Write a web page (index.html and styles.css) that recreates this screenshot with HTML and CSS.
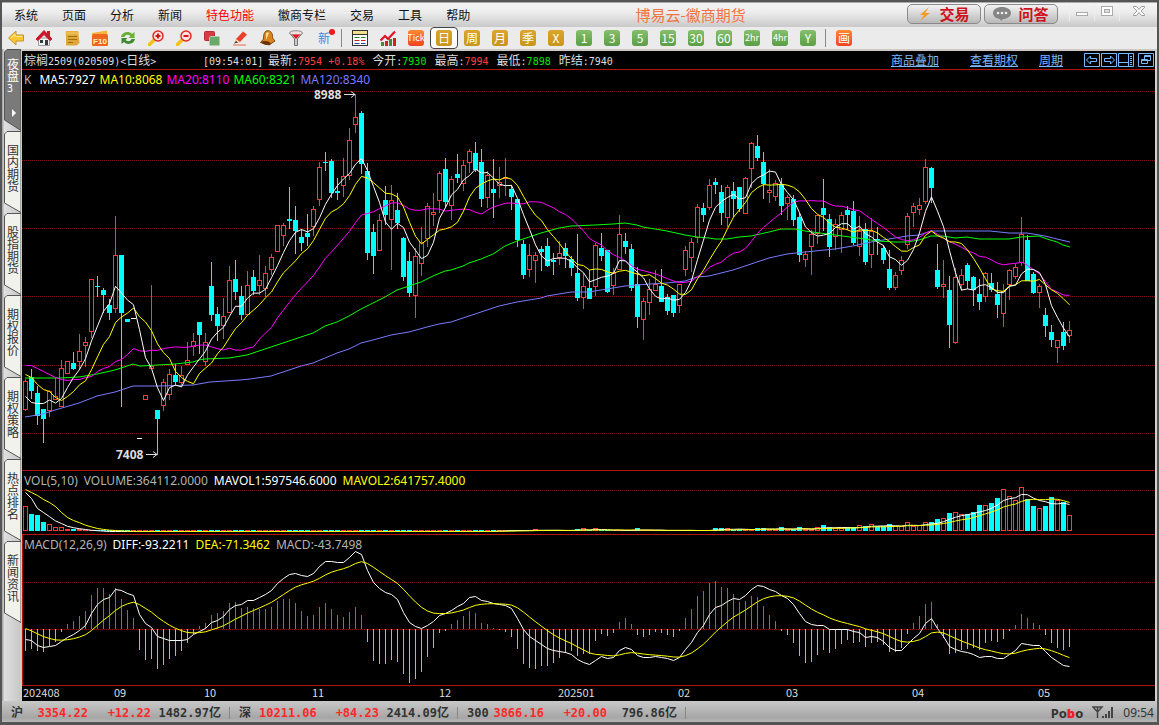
FILE: index.html
```html
<!DOCTYPE html>
<html lang="zh-CN">
<head>
<meta charset="utf-8">
<title>博易云-徽商期货</title>
<link rel="stylesheet" href="styles.css">
</head>
<body>
<div class="window">
  <header class="titlebar">
    <nav class="menu">
      <button>系统</button><button>页面</button><button>分析</button><button>新闻</button><button class="hot">特色功能</button><button>徽商专栏</button><button>交易</button><button>工具</button><button>帮助</button>
    </nav>
    <h1 class="title">博易云-徽商期货</h1>
    <div class="actions">
      <button class="pill"><svg width="14" height="16" viewBox="0 0 14 16"><path d="M11 1 2 9h4l-4 6 10-8H7z" fill="#f59a23"/></svg><span>交易</span></button>
      <button class="pill"><svg width="18" height="14" viewBox="0 0 18 14"><path d="M9 0c5 0 9 2.500 9 6s-4 6-8 6l-2 2-1-2C3 11.500 0 9.500 0 6s4-6 9-6z" fill="#858585"/><circle cx="5" cy="6" r="1.300" fill="#eee"/><circle cx="9" cy="6" r="1.300" fill="#eee"/><circle cx="13" cy="6" r="1.300" fill="#eee"/></svg><span>问答</span></button>
    </div>
    <div class="winctl">
      <button aria-label="最小化"><svg width="14" height="14"><rect x="1.500" y="8.500" width="11" height="3" fill="#fff" stroke="#aaa"/></svg></button>
      <button aria-label="最大化"><svg width="14" height="14"><rect x="1.500" y="2.500" width="11" height="9" fill="#fff" stroke="#aaa"/><rect x="4.500" y="5.500" width="5" height="3" fill="#ddd" stroke="#aaa"/></svg></button>
      <button aria-label="关闭"><svg width="14" height="14"><path d="M1.500 2.500h3l2.500 3 2.500-3h3v1L9 7l3.500 3.500v1h-3L7 8.500l-2.500 3h-3v-1L5 7 1.500 3.500z" fill="#fff" stroke="#999"/></svg></button>
    </div>
  </header>

  <div class="toolbar">
    <button aria-label="后退"><svg width="16" height="16"><path d="M.5 8 8 1v4h7.500v6H8v4z" fill="#fcc630" stroke="#c8922a"/><path d="M3 8l4-4v2.500h7" fill="none" stroke="#ffe9a0"/></svg></button>
    <button aria-label="首页"><svg width="16" height="16"><path d="M2.500 8h11v7.500h-11z" fill="#f2f2f2" stroke="#999"/><path d="M11 1h3v5h-3z" fill="#b22"/><path d="M0 9 8 .5 16 9l-2 1.500-6-6-6 6z" fill="#c9152b" stroke="#c9152b"/><path d="M4 10h3v3H4z" fill="#2c3b44"/><path d="M9 10h3v5H9z" fill="#3a3a3a"/></svg></button>
    <button aria-label="公告"><svg width="16" height="16"><path d="M2 1h12l1.500 12-3 2.500H2z" fill="#e0a63a"/><path d="M1.500 1.500h13v3h-13z" fill="#f0bb50"/><path d="M4 6.500h9M4 9.500h9M4 12.500h5" stroke="#a36b14"/></svg></button>
    <button aria-label="F10"><svg width="18" height="16"><path d="M1 3 16 .5V5H1z" fill="#f6b23d"/><rect x="1" y="4" width="16" height="12" rx="1.500" fill="#f0641e"/><text x="9" y="14" class="ic-sm">F10</text></svg></button>
    <button aria-label="刷新"><svg width="16" height="16"><path d="M1 7c1-5 8-6.500 11-3l2.500-2v6H8.500L10.500 6C8 4 5.500 4.500 4.500 7z" fill="#6ab035"/><path d="M15 9c-1 5-8 6.500-11 3l-2.500 2V8h6l-2 2c2.500 2 5 1.500 6-1z" fill="#3d8a2c"/></svg></button>
    <button aria-label="放大"><svg width="16" height="16"><path d="M6 10 1.500 14.500" stroke="#f3c11c" stroke-width="3.500" stroke-linecap="round"/><circle cx="10" cy="6" r="5" fill="#fbe4e0" stroke="#e02a22" stroke-width="1.500"/><path d="M7.500 6h5M10 3.500v5" stroke="#d01818" stroke-width="2"/></svg></button>
    <button aria-label="缩小"><svg width="16" height="16"><path d="M6 10 1.500 14.500" stroke="#f3c11c" stroke-width="3.500" stroke-linecap="round"/><circle cx="10" cy="6" r="5" fill="#fbe4e0" stroke="#e02a22" stroke-width="1.500"/><path d="M7.500 6h5" stroke="#d01818" stroke-width="2"/></svg></button>
    <button aria-label="叠加"><svg width="16" height="16"><rect x=".5" y="1.500" width="10" height="9" rx="1" fill="#d83a42" stroke="#bb2a32"/><rect x="5.500" y="6.500" width="10" height="9" rx="1" fill="#6ba869" stroke="#a9cda6"/></svg></button>
    <button aria-label="画线"><svg width="16" height="16"><path d="M4 9 11 1.500 15 4.500 8 12 3 13z" fill="#e9402c"/><path d="M4 9 2 13.500 8 12z" fill="#f7d9a8"/><path d="M2 13.500 4 11l2 1.500z" fill="#333"/><path d="M1 15h13" stroke="#e06a50"/></svg></button>
    <button aria-label="预警"><svg width="16" height="16"><path d="M6 1c5-1.500 7 3 6.500 7L15 11 9 15 .5 12.500 3.500 9C3.500 6 3.500 3 6 1z" fill="#d98420" stroke="#8a4b10"/><path d="M6 3c2-1 3 0 3 0L6 10z" fill="#ffe08a"/><path d="M1 12c3-2 9-1 10 2-3 2-8 1-10-2z" fill="#6b3208"/></svg></button>
    <button aria-label="筛选"><svg width="16" height="16"><path d="M2 3.500 6.500 9v6.500h3V9L14 3.500z" fill="#c8c8c8" stroke="#777"/><ellipse cx="8" cy="3" rx="6.500" ry="2.300" fill="#f1e0e0" stroke="#888"/><path d="M4 4.500h8L8 9z" fill="#e8101c"/></svg></button>
    <button class="new" aria-label="新功能">新<i></i></button>
    <span class="sep"></span>
    <button aria-label="报价"><svg width="16" height="16"><rect x=".5" y=".5" width="15" height="15" fill="#fff" stroke="#333"/><path d="M1 1h14v3.500H1z" fill="#efe08c"/><path d="M1 4.500h14" stroke="#333"/><path d="M2.500 7.500h5M9 7.500h4.500" stroke="#238a23"/><path d="M2.500 10.500h5M9 10.500h4.500" stroke="#c62020"/><path d="M2.500 13.500h5M9 13.500h4.500" stroke="#2044a0"/></svg></button>
    <button aria-label="走势"><svg width="18" height="17"><path d="M2 12h3v4H2zM10 9h3v7h-3z" fill="#46893c"/><path d="M6 11h3v5H6zM14 8h3v8h-3z" fill="#c22"/><path d="M1.500 10.500 6 6l3 3 7-7.500" fill="none" stroke="#e3142a" stroke-width="2.200"/></svg></button>
    <button><b class="tile red narrow">Tick</b></button>
    <button class="on"><b class="tile gold">日</b></button>
    <button><b class="tile gold">周</b></button>
    <button><b class="tile gold">月</b></button>
    <button><b class="tile gold">季</b></button>
    <button><b class="tile gold">X</b></button>
    <button><b class="tile green">1</b></button>
    <button><b class="tile green">3</b></button>
    <button><b class="tile green">5</b></button>
    <button><b class="tile green">15</b></button>
    <button><b class="tile green">30</b></button>
    <button><b class="tile green">60</b></button>
    <button><b class="tile green narrow">2hr</b></button>
    <button><b class="tile green narrow">4hr</b></button>
    <button><b class="tile green">Y</b></button>
    <span class="sep"></span>
    <button><b class="tile red">画</b></button>
  </div>

  <main class="work">
    <aside class="tabs">
      <button class="tab active"><svg viewBox="0 0 17 82"><path d="M17 .5H3L.5 3v68L17 81.500z"/></svg><span>夜盘</span><u>3</u><i></i></button>
      <button class="tab"><svg viewBox="0 0 17 82"><path d="M17 .5H3L.5 3v69L17 81.500z"/></svg><span>国内期货</span></button>
      <button class="tab"><svg viewBox="0 0 17 82"><path d="M17 .5H3L.5 3v69L17 81.500z"/></svg><span>股指期货</span></button>
      <button class="tab"><svg viewBox="0 0 17 82"><path d="M17 .5H3L.5 3v69L17 81.500z"/></svg><span>期权报价</span></button>
      <button class="tab"><svg viewBox="0 0 17 82"><path d="M17 .5H3L.5 3v69L17 81.500z"/></svg><span>期权策略</span></button>
      <button class="tab"><svg viewBox="0 0 17 82"><path d="M17 .5H3L.5 3v69L17 81.500z"/></svg><span>热点排名</span></button>
      <button class="tab"><svg viewBox="0 0 17 82"><path d="M17 .5H3L.5 3v69L17 81.500z"/></svg><span>新闻资讯</span></button>
    </aside>

    <section class="chart">
      <div class="quote">
        <span class="name">棕榈<u>2509(020509)&lt;</u>日线<u>&gt;</u></span>
        <span class="time"><u>[09:54:01]</u></span>
        <span>最新<u>:</u><u class="up">7954 +0.18%</u></span>
        <span>今开<u>:</u><u class="down">7930</u></span>
        <span>最高<u>:</u><u class="up">7994</u></span>
        <span>最低<u>:</u><u class="down">7898</u></span>
        <span>昨结<u>:7940</u></span>
        <nav class="links">
          <a href="#overlay">商品叠加</a><a href="#options">查看期权</a><a href="#period">周期</a>
          <div class="boxes">
            <button aria-label="左移"><svg width="16" height="14"><path d="M.5.5h15v13H.5zM2.500 7l4-4v2.500h6v3h-6V11z"/></svg></button>
            <button aria-label="右移"><svg width="16" height="14"><path d="M.5.5h15v13H.5zM13.500 7l-4-4v2.500h-6v3h6V11z"/></svg></button>
            <button aria-label="分栏"><svg width="16" height="14"><path d="M.5.5h15v13H.5zM10.500 1v12M1 9.500h9M12 3.500h2M12 5.500h2M12 7.500h2M12 9.500h2M12 11.500h2"/></svg></button>
            <button class="pop" aria-label="弹出"><svg width="16" height="14"><path d="M.5.5h15v13H.5zM6.500 6V2.500h6v5H10M3.500 6.500h6v4h-6zM6 3.500h6M3 7.500h6"/></svg></button>
          </div>
        </nav>
      </div>
      <div class="pane price">
        <div class="legend"><span class="g">K</span><span class="w ma5">MA5:7927</span><span class="y">MA10:8068</span><span class="m">MA20:8110</span><span class="gr">MA60:8321</span><span class="b">MA120:8340</span></div>
        <svg id="price" class="plot"></svg>
      </div>
      <div class="pane volume">
        <div class="legend"><span class="g">VOL(5,10)</span><span class="g">VOLUME:364112.0000</span><span class="w">MAVOL1:597546.6000</span><span class="y">MAVOL2:641757.4000</span></div>
        <svg id="volume" class="plot"></svg>
      </div>
      <div class="pane macd">
        <div class="legend"><span class="g">MACD(12,26,9)</span><span class="w">DIFF:-93.2211</span><span class="y">DEA:-71.3462</span><span class="g">MACD:-43.7498</span></div>
        <svg id="macd" class="plot"></svg>
      </div>
      <svg id="axis" class="axis"></svg>
    </section>
  </main>

  <footer class="status">
    <div class="index"><span>沪</span><b>3354.22</b><b>+12.22</b><span>1482.97亿</span></div>
    <div class="index"><span>深</span><b>10211.06</b><b>+84.23</b><span>2414.09亿</span></div>
    <div class="index"><span>300</span><b>3866.16</b><b>+20.00</b><span>796.86亿</span></div>
    <div class="tray">
      <strong>Po<b>b</b>o</strong>
      <svg width="22" height="14"><path d="M1 1h9L5.500 6zM5.500 1v11" fill="none" stroke="#444" stroke-width="1.500"/><path d="M10 10h2v2h-2zM13 8h2v4h-2zM16 5h2v7h-2zM19 1h2v11h-2z" fill="#444"/></svg>
      <time>09:54</time>
    </div>
  </footer>
</div>
<script src="chart.js"></script>
</body>
</html>
```
FILE: styles.css
```css
* { box-sizing: border-box; }
body {
  margin: 0;
  font: 12px/14px "Noto Sans CJK SC", sans-serif;
  color: #111;
  background: #555;
}
button {
  margin: 0;
  padding: 0;
  border: 0;
  background: none;
  font: inherit;
  color: inherit;
}
.window {
  display: flex;
  flex-direction: column;
  min-height: 100vh;
  border: solid #555;
  border-width: 2px 2px 3px;
  background: #d4cfcd;
}

/* title bar */
.titlebar {
  display: flex;
  flex: none;
  height: 25px;
  border-top: 1px solid #aaa;
  background: linear-gradient(#f4f4f4, #ececec 40%, #c9c9c9);
}
.menu { display: flex; align-items: center; white-space: nowrap; }
.menu button { padding: 0 12px; }
.menu .hot { color: #f00; }
.title {
  display: flex;
  align-items: center;
  justify-content: center;
  flex: 1;
  margin: 0;
  padding-right: 8px;
  font-size: 15px;
  font-weight: 400;
  color: #f37343;
}
.actions { display: flex; gap: 3px; padding-top: 1px; }
.pill {
  display: flex;
  align-items: center;
  justify-content: center;
  gap: 7px;
  width: 74px;
  height: 20px;
  border: 1px solid #8a8a8a;
  border-radius: 5px;
  background: linear-gradient(#f2f2f2, #d6d6d6 50%, #b8b8b8);
  font-size: 15px;
  font-weight: 700;
  color: #d0101a;
}
.winctl { display: flex; margin-left: 11px; }
.winctl button {
  width: 25px;
  height: 18px;
  border-left: 1px solid #eee;
}
.winctl button:last-child { width: 38px; }

/* toolbar */
.toolbar {
  display: flex;
  align-items: center;
  flex: none;
  height: 24px;
  border-bottom: 2px solid #cfc8c5;
  background: #ebebeb;
}
.toolbar button {
  display: flex;
  align-items: center;
  justify-content: center;
  width: 28px;
  height: 22px;
}
.toolbar .on { border: 1px solid #444; border-radius: 4px; background: #fff; }
.sep { width: 8px; height: 18px; background: linear-gradient(#888, #888) 3px 0 / 1px 100% no-repeat; }
.tile {
  display: flex;
  align-items: center;
  justify-content: center;
  width: 16px;
  height: 16px;
  border-radius: 3px;
  color: #fff;
  font-size: 12px;
  font-weight: 400;
  line-height: 16px;
}
.gold { background: linear-gradient(#dba52e, #c8951a); }
.green { background: linear-gradient(#86bf6c, #5a9e46); }
.red { background: linear-gradient(#ff8a30, #ee4420); }
.tile.narrow { font-size: 9px; }
.ic-sm { font: 700 8px "Liberation Sans", sans-serif; fill: #fff3c8; text-anchor: middle; }
.toolbar .new { position: relative; font-size: 12px; color: #3a8be0; }
.new i {
  position: absolute;
  top: 2px;
  right: 3px;
  width: 6px;
  height: 6px;
  border-radius: 50%;
  background: #f01818;
}

/* left tabs */
.work { display: flex; flex: 1; }
.tabs {
  display: flex;
  flex-direction: column;
  flex: none;
  width: 20px;
  padding-left: 2px;
  border-right: 2px solid #cfc8c5;
  margin-top: -2px;
  background: linear-gradient(90deg, #aaa 1px, #e0e0e0 2px, #c8c8c8);
}
.tab {
  position: relative;
  display: flex;
  flex-direction: column;
  align-items: flex-start;
  width: 16px;
  height: 82px;
  padding: 13px 0 0 3px;
}
.tab svg { position: absolute; inset: 0; width: 17px; height: 82px; }
.tab path { fill: #f2f2ec; stroke: #555; }
.tab span { position: relative; width: 12px; line-height: 12px; word-break: break-all; color: #333; }
.tab.active { padding-top: 9px; }
.tab.active path { fill: #7a7a7a; }
.tab.active span { color: #fff; }
.tab u { position: relative; font: 10px/14px "DejaVu Sans Mono", monospace; text-decoration: none; color: #fff; }
.tab.active i {
  position: relative;
  width: 0;
  margin: 13px 0 0 5px;
  border: solid transparent;
  border-width: 4px 0 4px 4px;
  border-left-color: #fff;
}

/* chart */
.chart {
  display: flex;
  flex-direction: column;
  flex: 1;
  min-width: 0;
  margin-right: 2px;
  background: #000;
}
.quote {
  display: flex;
  align-items: center;
  flex: none;
  gap: 8px;
  height: 19px;
  padding: 0 1px 0 2px;
  border-bottom: 1px solid #b4140a;
  color: #ddd;
  white-space: nowrap;
}
.quote u { font: 10px "DejaVu Sans Mono", monospace; text-decoration: none; white-space: pre; }
.quote .name { width: 171px; }
.quote .time { width: 57px; }
.quote .up { color: #ff4040; }
.quote .down { color: #00e600; }
.links { display: flex; align-items: center; margin-left: auto; color: #7ab8ff; }
.links a { color: inherit; margin-left: 31px; }
.links a:last-of-type { margin-left: 21px; }
.boxes { display: flex; gap: 1px; margin-left: 21px; }
.boxes button { display: flex; }
.boxes path { fill: none; stroke: #7ab8ff; }
.boxes .pop { margin-left: 3px; }

.pane { position: relative; border-bottom: 1px solid #b4140a; }
.price { flex: 1 0 401px; }
.volume { flex: 0 0 64px; }
.macd { flex: 0 0 151px; border-left: 1px solid #b4140a; }
.legend {
  position: absolute;
  top: 2px;
  left: 2px;
  display: flex;
  gap: 6px;
  font: 12px/16px "Noto Sans", sans-serif;
  white-space: nowrap;
}
.price .legend { gap: 4px; }
.macd .legend { left: 1px; }
.legend .ma5 { margin-left: 4px; }
.plot { display: block; position: absolute; inset: 0; width: 100%; height: 100%; pointer-events: none; }
.g { color: #b4b4b4; }
.w { color: #fff; }
.y { color: #ff0; }
.m { color: #f0f; }
.gr { color: #0f0; }
.b { color: #7a7aff; }
.axis { flex: none; width: 100%; height: 15px; }
.axis text { font: 11px "Noto Sans CJK SC", sans-serif; fill: #ddd; }

.grid { stroke: #8c0c0c; stroke-dasharray: 1 1; }
.bars { shape-rendering: crispEdges; }
.rise { fill: #000; stroke: #ff3c32; }
.riseline { fill: #ff3c32; }
.fall { fill: #0ff; }
.flat { fill: #fff; }
.line { fill: none; stroke-width: 1; }
.tag { font: 700 12px "Noto Sans", sans-serif; fill: #ddd; }
.arrow { fill: none; stroke: #ddd; }

/* status bar */
.status {
  display: flex;
  align-items: center;
  flex: none;
  height: 21px;
  padding: 2px 3px 0 0;
  background: linear-gradient(#c8c8c8, #a6a6a6 80%, #b8b8b8);
  font: 700 12px/14px "DejaVu Sans Mono", "Noto Sans CJK SC", monospace;
  color: #333;
}
.index {
  display: grid;
  grid-template-columns: 20px 57px 63px 70px;
  width: 228px;
  padding-left: 9px;
  background: linear-gradient(#888, #888) 100% 50% / 1px 12px no-repeat;
}
.index > * + * { text-align: right; }
.index b { color: #ff2828; }
.tray { display: flex; align-items: center; gap: 9px; margin-left: auto; font: 12px/14px "Noto Sans", sans-serif; }
.tray strong { font-weight: 700; font-size: 13px; }
.tray b { color: #f02020; }
```
FILE: chart.js
```js
// Each entry: direction (r rise, c fall, w flat), high, body top, body bottom, low.
const candles = `r379,381,410,411 c369,377,391,399 c386,393,416,425 c409,409,419,443 r390,391,411,417 r378,396,400,400 r360,368,407,407 r361,361,374,374 c352,363,369,370 r334,351,362,370
r337,342,346,367 r279,279,332,338 c276,286,287,297 c288,290,295,313 c299,305,313,320 r216,255,309,313 c255,255,313,407 c319,319,322,322 w318,318,319,319 w438,438,439,439
r395,395,400,400 r285,366,369,369 c410,410,419,455 r379,382,406,411 r369,374,395,400 c364,375,382,385 r366,375,383,385 r342,360,365,365 r333,341,347,356 c322,322,335,354
r333,342,362,366 c262,286,315,321 c307,314,326,341 r298,316,326,339 r266,280,313,313 c260,279,292,300 c286,296,315,320 r271,285,315,315 c270,277,291,295 r255,280,286,295
r266,273,289,297 r254,257,270,275 r225,225,252,252 r223,225,236,246 c187,219,221,229 c206,220,231,254 c229,237,243,251 c214,233,237,246 r206,209,227,236 r162,167,200,206
c152,162,163,171 c159,161,193,198 c178,191,193,200 r158,176,186,197 r128,140,176,180 r94,117,125,133 c111,113,164,174 c163,171,253,260 c224,232,256,274 r214,220,251,251
c186,200,215,225 r185,200,220,270 c193,210,223,229 c237,238,277,281 c252,261,293,297 r248,256,296,318 r227,242,264,276 r203,206,239,247 r193,212,215,226 r171,173,201,213
c158,169,202,208 r176,179,206,220 c154,174,178,183 r160,165,184,191 r149,151,163,173 c142,153,170,172 c149,162,199,207 r171,175,198,208 c159,189,193,218 r167,182,186,198
r158,177,179,196 c185,189,197,210 c199,199,240,247 c240,244,275,279 r244,255,270,277 r252,255,261,283 c246,249,252,271 c238,246,266,267 c253,260,262,275 r241,253,258,265
c243,248,256,268 c256,259,268,276 c234,273,298,301 r273,286,298,309 c270,288,299,299 r243,245,287,296 c233,248,256,261 c250,250,292,293 r268,273,286,295 r215,234,270,270
c233,241,247,254 c244,249,288,291 c267,284,317,328 r298,301,320,340 r279,289,303,315 r270,284,291,291 c269,286,302,302 c294,297,311,315 c295,295,313,317 r284,284,306,313
r246,250,270,276 r238,242,258,272 r204,207,238,243 c203,208,215,222 r179,185,208,210 c178,182,185,194 c185,192,213,225 r185,187,218,227 c182,191,199,217 c187,187,209,212
r177,178,214,214 r142,143,169,188 c135,146,158,161 c152,162,184,199 r169,190,193,203 r180,183,197,201 c178,184,206,215 r195,197,204,220 c195,199,220,226 c213,217,255,262
r251,254,260,267 r230,234,247,275 r215,215,234,244 c179,208,215,231 c214,219,247,257 r219,224,237,250 r212,215,230,253 c206,210,215,230 c201,211,243,245 r216,231,247,256
c223,229,262,265 r218,231,255,268 c227,239,241,255 c245,248,260,264 c250,269,288,290 r272,275,288,290 r256,260,271,275 r213,216,245,249 r203,206,213,227 r198,205,210,215
r159,167,202,204 c167,168,188,203 c244,270,287,289 r260,284,287,298 c276,290,325,348 r268,277,343,344 r269,275,285,291 c263,265,281,289 c276,277,290,306 c279,294,302,310
r272,273,297,302 c273,283,290,292 c282,294,305,318 r284,291,314,327 r269,270,285,300 r264,267,277,279 r217,234,263,266 c235,240,281,281 c272,274,293,294 r284,286,293,308
c308,315,326,337 c325,332,340,347 r340,340,348,363 c322,332,346,350 r321,330,336,343`
  .split(/\s+/).map(s => [s[0], ...s.slice(1).split(",").map(Number)]);

const X = i => 25 + 6 * i;
const close = candles.map(c => c[0] === "c" ? c[3] : c[2]);

// Moving average; `seed` supplies the leading values whose window starts before the data.
function average(values, n, seed) {
  return values.map((v, i) => i < seed.length ? seed[i]
    : values.slice(i - n + 1, i + 1).reduce((a, b) => a + b) / n);
}
const seriesPoints = values => values.map((v, i) => `${X(i) + .5},${(v + .5).toFixed(1)}`).join(" ");
const line = (points, color) => `<polyline class="line" stroke="${color}" points="${points}"/>`;
const grid = y => `<line class="grid" x1="22" x2="3000" y1="${y}.5" y2="${y}.5"/>`;
const rect = (cls, x, y, w, h) => `<rect class="${cls}" x="${x}" y="${y}" width="${w}" height="${h}"/>`;
const hollow = (x, y, w, h) => h < 3 ? rect("riseline", x, y, w, h)
  : rect("rise", x + .5, y + .5, w - 1, h - 1);
function draw(id, left, top, content) {
  document.getElementById(id).innerHTML = `<g transform="translate(${-left},${-top})">${content}</g>`;
}

// Price
const bars = candles.map(([d, h, t, b, l], i) => {
  const x = X(i);
  if (d === "w") return rect("flat", x - 2, t, 5, 1);
  if (d === "c") return rect("fall", x, h, 1, l - h) + rect("fall", x - 2, t, 5, b - t);
  return rect("riseline", x, h, 1, l - h) + hollow(x - 2, t, 5, b - t);
}).join("");
const ma60 = "25,378 60,378 79,377 97,374 115,370 127,366 133,364 140,366 175,364 193,362 199,360 205,359 229,358 247,355 277,345 313,333 325,326 337,322 349,316 361,309 385,297 397,290 409,286 421,282 433,276 445,271 451,270 463,266 469,263 481,259 493,254 505,246 517,241 529,237 541,233 559,228 571,226 595,225 613,224 625,223 637,225 643,227 667,231 685,235 697,237 709,238 715,239 727,239 739,237 751,236 769,232 781,229 795,229 805,231 820,233 835,235 850,237 865,239 877,241 895,242 907,242 919,240 931,236 943,236 955,238 967,237 979,239 1009,239 1021,237 1039,236 1047,239 1057,242 1063,245 1070,247";
const ma120 = "25,417 43,414 55,410 79,403 97,396 115,392 127,388 133,386 160,386 193,385 210,382 240,380 250,379 271,376 283,372 301,366 313,363 325,358 337,353 349,349 361,343 373,340 391,335 409,332 427,327 439,324 451,322 463,318 481,312 499,306 517,302 541,298 547,296 571,292 589,292 607,289 625,286 650,284 667,283 685,281 697,277 709,276 721,273 733,270 751,264 769,258 787,254 805,252 835,249 853,246 871,242 889,239 907,236 919,235 931,231 990,231 1009,233 1027,233 1045,236 1057,239 1070,242";
const ma5 = average(close, 5, [396, 402, 403, 403]);
const ma10 = average(close, 10, [374, 377, 384, 389, 391, 397, 400, 396, 391]);
const ma20 = average(close, 20, [365, 365, 368, 371, 374, 377, 379, 380, 379, 379, 377, 376, 371, 368, 366, 361, 359, 354, 348]);
draw("price", 22, 70,
  [91, 160, 228, 296, 365, 433].map(grid).join("") +
  `<g class="bars">${bars}</g>` +
  line(ma120, "#7a7aff") + line(ma60, "#00ff00") + line(seriesPoints(ma20), "#ff00ff") +
  line(seriesPoints(ma10), "#ffff00") + line(seriesPoints(ma5), "#ffffff") +
  `<text class="tag" x="314" y="99">8988</text><path class="arrow" d="M344 94.500h11M351 91.500l4 3-4 3"/>` +
  `<text class="tag" x="116" y="459">7408</text><path class="arrow" d="M146 454.500h11M153 451.500l4 3-4 3"/>`);

// Volume
const vol = candles.map((c, i) => i < 78 ? 531 : i < 115 ? 530 : 528);
[506, 514, 515, 522, 524, 527, 527, 529, 529, 529].forEach((v, i) => vol[i] = v);
[[85, 529], [92, 529], [93, 528], [95, 528], [102, 528], [118, 530], [119, 529], [120, 529]].forEach(([i, v]) => vol[i] = v);
[529, 528, 528, 529, 529, 527, 529, 529, 527, 529, 529, 527, 525, 527, 528, 528, 527, 527, 525, 526, 524, 526, 526, 524, 526, 526, 522, 526, 525, 522, 522, 519, 518, 513, 512, 514, 514, 512, 505, 505, 503, 498, 489, 496, 500, 487, 499, 506, 508, 506, 497, 500, 502, 515]
  .forEach((v, i) => vol[121 + i] = v);
draw("volume", 22, 471, grid(490) + `<g class="bars">` + vol.map((v, i) => {
  const y = Math.min(v, 530);
  return candles[i][0] === "c" ? rect("fall", X(i) - 2, y, 5, 531 - y) : hollow(X(i) - 2, y, 5, 531 - y);
}).join("") + `</g>` +
  line(seriesPoints(average(vol, 5, [492, 498, 508, 512])), "#ffffff") +
  line(seriesPoints(average(vol, 10, [489, 492, 495, 499, 502, 506, 512, 517, 520])), "#ffff00"));

// MACD
const zero = 629;
const hist = [
  650, 648, 650, 651, 645, 641, 631, 624, 621, 616, 611, 595, 588, 588, 594, 588, 599, 610, 618, 649, 659, 658, 668, 664, 658, 655, 650, 642, 633, 626,
  623, 615, 613, 611, 603, 602, 608, 607, 608, 609, 609, 607, 601, 599, 599, 603, 611, 616, 615, 607, 603, 609, 615, 617, 612, 607, 615, 641, 660, 663,
  663, 659, 661, 673, 682, 678, 671, 656, 647, 632, 630, 624, 620, 616, 611, 613, 623, 624, 628, 629, 631, 636, 648, 663, 667, 668, 665, 665, 662, 657,
  652, 650, 655, 653, 653, 640, 633, 635, 632, 622, 618, 624, 634, 636, 634, 631, 632, 634, 636, 630, 618, 609, 596, 591, 583, 581, 587, 588, 594, 602,
  601, 596, 597, 606, 615, 621, 630, 634, 642, 655, 662, 661, 654, 649, 652, 648, 643, 639, 642, 641, 646, 642, 641, 644, 651, 651, 647, 633, 623, 616,
  604, 602, 624, 637, 653, 652, 649, 648, 647, 649, 642, 640, 641, 638, 630, 625, 614, 618, 623, 625, 634, 642, 647, 649, 646];
const diff = [
  639, 640, 645, 647, 646, 645, 641, 637, 634, 630, 625, 613, 604, 599, 597, 589, 590, 593, 595, 614, 623, 627, 636, 638, 640, 640, 640, 639, 634, 631,
  628, 622, 620, 616, 609, 605, 604, 600, 600, 597, 594, 590, 583, 578, 574, 573, 575, 576, 573, 566, 561, 561, 562, 562, 557, 551, 554, 570, 582, 588,
  592, 594, 599, 612, 622, 626, 628, 625, 621, 615, 613, 610, 606, 603, 597, 596, 600, 601, 603, 604, 605, 608, 618, 629, 636, 640, 644, 648, 650, 651,
  652, 654, 659, 662, 664, 660, 656, 658, 657, 650, 647, 649, 655, 657, 657, 656, 657, 658, 660, 657, 649, 642, 632, 625, 614, 607, 605, 601, 598, 599,
  595, 589, 585, 586, 589, 591, 595, 598, 604, 613, 621, 624, 625, 625, 629, 629, 629, 629, 631, 632, 637, 636, 637, 641, 647, 650, 650, 644, 638, 633,
  623, 618, 628, 636, 646, 649, 651, 652, 654, 657, 656, 656, 658, 658, 654, 650, 643, 644, 645, 645, 651, 657, 661, 665, 666];
const dea = [];
diff.forEach((v, i) => dea.push(i ? dea[i - 1] * .8 + v * .2 : 628));
draw("macd", 23, 535, grid(582) + grid(zero) + `<g class="bars">` + hist.map((v, i) =>
  v < zero ? rect("riseline", X(i), v, 1, zero - v) : rect("fall", X(i), zero, 1, v - zero + 1)).join("") + `</g>` +
  line(seriesPoints(diff), "#ffffff") + line(seriesPoints(dea), "#ffff00"));

// Month axis
draw("axis", 22, 686, [[23, "202408"], [114, "09"], [204, "10"], [312, "11"], [439, "12"], [558, "202501"], [678, "02"], [786, "03"], [912, "04"], [1038, "05"]]
  .map(([x, t]) => `<text x="${x}" y="697">${t}</text>`).join(""));
```
